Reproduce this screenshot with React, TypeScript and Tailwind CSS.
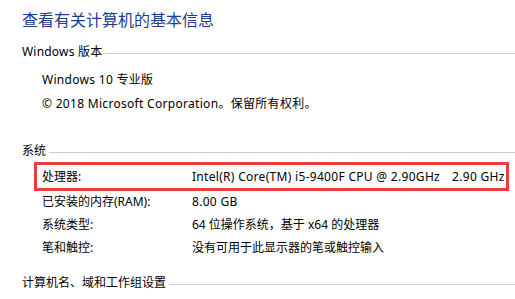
export default function App() {
  const rows = [
    { label: "已安装的内存(RAM):", value: "8.00 GB", latin: true },
    { label: "系统类型:", value: "64 位操作系统，基于 x64 的处理器", latin: false },
    { label: "笔和触控:", value: "没有可用于此显示器的笔或触控输入", latin: false },
  ];

  return (
    <div className="w-[515px] h-[299px] overflow-hidden bg-white text-black text-[12px] font-['Noto_Sans','Noto_Sans_CJK_SC',sans-serif]">
      <div className="pl-[22px]">
        {/* TITLE */}
        <div className="mt-[8px] h-[24px] leading-[24px] text-[16px] text-[#1e3c8f]">
          查看有关计算机的基本信息
        </div>

        {/* WINDOWS EDITION */}
        <div className="mt-[8px] h-[24px] flex items-center">
          <span className="leading-[24px] tracking-[0.2px]">Windows 版本</span>
          <div className="flex-1 h-px bg-[#cccccc] ml-[3px] mt-[3px]" />
        </div>
        <div className="mt-[4px] pl-[20px] tracking-[0.3px]">
          <div className="h-[24px] leading-[24px]">Windows 10 专业版</div>
          <div className="h-[24px] leading-[24px]">
            © 2018 Microsoft Corporation。保留所有权利。
          </div>
        </div>

        {/* SYSTEM */}
        <div className="mt-[23px] h-[24px] flex items-center">
          <span className="leading-[24px]">系统</span>
          <div className="flex-1 h-px bg-[#cccccc] ml-[3px] mt-[3px]" />
        </div>

        <div className="mt-[-1px] ml-[12px] w-[475px] border-[3px] border-[#ee3a3f] flex h-[29px] items-center pl-[5px]">
          <div className="w-[150px] shrink-0">处理器:</div>
          <div className="whitespace-nowrap tracking-[0.3px]">
            Intel(R) Core(TM) i5-9400F CPU @ 2.90GHz
            <span className="ml-[12px]">2.90 GHz</span>
          </div>
        </div>

        <div className="mt-[-1px]">
          {rows.map((row) => (
            <div
              key={row.label}
              className="h-[23px] flex items-center pl-[20px]"
            >
              <div className="w-[150px] shrink-0">{row.label}</div>
              <div
                className={
                  row.latin
                    ? "whitespace-nowrap tracking-[0.3px]"
                    : "whitespace-nowrap"
                }
              >
                {row.value}
              </div>
            </div>
          ))}
        </div>

        {/* COMPUTER NAME */}
        <div className="mt-[12px] h-[24px] flex items-center">
          <span className="leading-[24px]">计算机名、域和工作组设置</span>
          <div className="flex-1 h-px bg-[#cccccc] ml-[3px] mt-[3px]" />
        </div>
      </div>
    </div>
  );
}
